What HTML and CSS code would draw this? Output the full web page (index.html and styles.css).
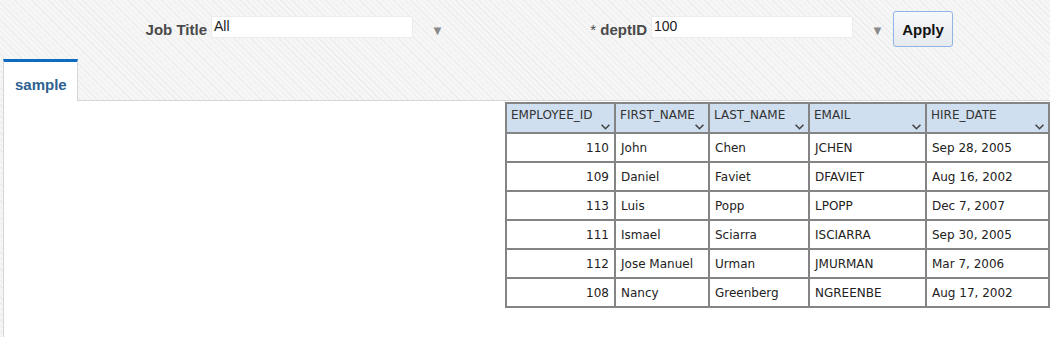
FILE: index.html
```html
<!DOCTYPE html>
<html lang="en">
<head>
  <meta charset="UTF-8" />
  <title>Employees</title>
  <link rel="stylesheet" href="styles.css">
</head>
<body>
  <div class="page">
    <!-- Filter bar -->
    <div class="filter-bar">
      <label class="field-label first">Job Title</label>
      <div class="field-input">All</div>
      <span class="drop-arrow">&#9660;</span>

      <label class="field-label second"><span class="req">*</span> deptID</label>
      <div class="field-input">100</div>
      <span class="drop-arrow">&#9660;</span>

      <button class="apply-btn">Apply</button>
    </div>

    <!-- Tabs -->
    <div class="tab-strip">
      <div class="tab active">sample</div>
      <div class="tab-fill"></div>
    </div>

    <!-- Content -->
    <div class="tab-content">
      <table class="grid">
        <thead>
          <tr>
            <th class="c-id">EMPLOYEE_ID<svg class="sort" viewBox="0 0 8 5"><polyline points="0.5,0.5 4,4 7.5,0.5"/></svg></th>
            <th class="c-first">FIRST_NAME<svg class="sort" viewBox="0 0 8 5"><polyline points="0.5,0.5 4,4 7.5,0.5"/></svg></th>
            <th class="c-last">LAST_NAME<svg class="sort" viewBox="0 0 8 5"><polyline points="0.5,0.5 4,4 7.5,0.5"/></svg></th>
            <th class="c-email">EMAIL<svg class="sort" viewBox="0 0 8 5"><polyline points="0.5,0.5 4,4 7.5,0.5"/></svg></th>
            <th class="c-date">HIRE_DATE<svg class="sort" viewBox="0 0 8 5"><polyline points="0.5,0.5 4,4 7.5,0.5"/></svg></th>
          </tr>
        </thead>
        <tbody>
          <tr><td class="num">110</td><td>John</td><td>Chen</td><td>JCHEN</td><td>Sep 28, 2005</td></tr>
          <tr><td class="num">109</td><td>Daniel</td><td>Faviet</td><td>DFAVIET</td><td>Aug 16, 2002</td></tr>
          <tr><td class="num">113</td><td>Luis</td><td>Popp</td><td>LPOPP</td><td>Dec 7, 2007</td></tr>
          <tr><td class="num">111</td><td>Ismael</td><td>Sciarra</td><td>ISCIARRA</td><td>Sep 30, 2005</td></tr>
          <tr><td class="num">112</td><td>Jose Manuel</td><td>Urman</td><td>JMURMAN</td><td>Mar 7, 2006</td></tr>
          <tr><td class="num">108</td><td>Nancy</td><td>Greenberg</td><td>NGREENBE</td><td>Aug 17, 2002</td></tr>
        </tbody>
      </table>
    </div>
  </div>
</body>
</html>
```

FILE: styles.css
```css
html, body {
  margin: 0;
  height: 100%;
}
body {
  font-family: "Liberation Sans", Arial, sans-serif;
  background-color: #f6f6f6;
  background-image: repeating-linear-gradient(45deg, #ededed 0 1px, transparent 1px 4px);
}
.page {
  height: 100%;
  display: flex;
  flex-direction: column;
}
.filter-bar {
  display: flex;
  align-items: center;
  height: 50px;
  padding: 4px 0 5px 100px;
}
.field-label {
  font-size: 15px;
  font-weight: bold;
  color: #4a4a4a;
  text-align: right;
  margin-right: 4px;
}
.field-label.first { width: 107px; }
.field-label.second { width: 204px; }
.req {
  font-weight: normal;
}
.field-input {
  width: 202px;
  height: 22px;
  line-height: 18px;
  padding: 0 2px;
  box-sizing: border-box;
  background: #fff;
  border: 1px solid #ececec;
  border-radius: 2px;
  font-size: 14px;
  color: #222;
  margin-top: -4px;
}
.drop-arrow {
  font-size: 13px;
  color: #8a8a8a;
  width: 12px;
  margin-left: 18px;
  margin-top: 2px;
}
.apply-btn {
  margin-left: 10px;
  width: 60px;
  height: 36px;
  border: 1px solid #8fb5e6;
  border-radius: 3px;
  background: linear-gradient(#f7f8fa, #e6e9ee);
  font-family: "Liberation Sans", Arial, sans-serif;
  font-size: 15px;
  font-weight: bold;
  color: #111;
  padding: 0;
}
.tab-strip {
  display: flex;
  height: 42px;
  padding-left: 3px;
}
.tab {
  width: 75px;
  box-sizing: border-box;
  background: #fff;
  border-top: 3px solid #0f6bbf;
  border-left: 1px solid #d6d6d6;
  border-right: 1px solid #d6d6d6;
  font-size: 15px;
  font-weight: bold;
  color: #2e5f92;
  padding: 14px 0 0 11px;
}
.tab-fill {
  flex: 1;
  border-bottom: 1px solid #d6d6d6;
}
.tab-content {
  flex: 1;
  margin-left: 3px;
  background: #fff;
  border-left: 1px solid #d6d6d6;
  padding: 1px 0 0 501px;
}
.grid {
  border-collapse: collapse;
  font-family: "DejaVu Sans", sans-serif;
  font-size: 12px;
  color: #222;
  border: 2px solid #848484;
}
.grid th, .grid td {
  border: 2px solid #848484;
  box-sizing: border-box;
  white-space: nowrap;
}
.grid th {
  position: relative;
  height: 30px;
  background: #cfdff0;
  font-weight: normal;
  text-align: left;
  vertical-align: top;
  padding: 4px 5px 0 4px;
  color: #333;
}
.sort {
  position: absolute;
  right: 4px;
  bottom: 2px;
  width: 9px;
  height: 6px;
  fill: none;
  stroke: #444;
  stroke-width: 1.4;
}
.grid td {
  height: 29px;
  padding: 0 5px;
}
.grid td.num { text-align: right; }
.c-id { width: 109px; }
.c-first { width: 94px; }
.c-last { width: 100px; }
.c-email { width: 117px; }
.c-date { width: 123px; }
```
